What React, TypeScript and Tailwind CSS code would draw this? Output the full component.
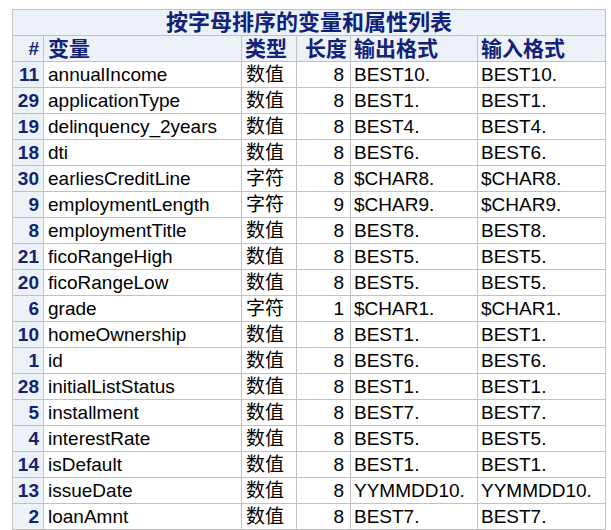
import React from "react";

const rows: [string, string, string, string, string, string][] = [
  ["11", "annualIncome", "数值", "8", "BEST10.", "BEST10."],
  ["29", "applicationType", "数值", "8", "BEST1.", "BEST1."],
  ["19", "delinquency_2years", "数值", "8", "BEST4.", "BEST4."],
  ["18", "dti", "数值", "8", "BEST6.", "BEST6."],
  ["30", "earliesCreditLine", "字符", "8", "$CHAR8.", "$CHAR8."],
  ["9", "employmentLength", "字符", "9", "$CHAR9.", "$CHAR9."],
  ["8", "employmentTitle", "数值", "8", "BEST8.", "BEST8."],
  ["21", "ficoRangeHigh", "数值", "8", "BEST5.", "BEST5."],
  ["20", "ficoRangeLow", "数值", "8", "BEST5.", "BEST5."],
  ["6", "grade", "字符", "1", "$CHAR1.", "$CHAR1."],
  ["10", "homeOwnership", "数值", "8", "BEST1.", "BEST1."],
  ["1", "id", "数值", "8", "BEST6.", "BEST6."],
  ["28", "initialListStatus", "数值", "8", "BEST1.", "BEST1."],
  ["5", "installment", "数值", "8", "BEST7.", "BEST7."],
  ["4", "interestRate", "数值", "8", "BEST5.", "BEST5."],
  ["14", "isDefault", "数值", "8", "BEST1.", "BEST1."],
  ["13", "issueDate", "数值", "8", "YYMMDD10.", "YYMMDD10."],
  ["2", "loanAmnt", "数值", "8", "BEST7.", "BEST7."],
];

const font = { fontFamily: '"Liberation Sans", Arial, "Noto Sans CJK SC", sans-serif' };

export default function App() {
  return (
    <div className="bg-white w-[611px] h-[530px] overflow-hidden pl-[12px] pt-[9px]" style={font}>
      <div className="grid grid-cols-[30px_197px_54px_53px_126px_127px] auto-rows-[25px] gap-px bg-[#c1c1c1] p-px w-[594px]">
        <div className="col-span-6 bg-[#edf2f9] text-[#112277] font-bold text-[22px] leading-none flex items-center justify-center">
          按字母排序的变量和属性列表
        </div>
        <div className="bg-[#edf2f9] text-[#112277] font-bold text-[19px] leading-none flex items-center justify-end pr-[4px]">#</div>
        <div className="bg-[#edf2f9] text-[#112277] font-bold text-[21px] leading-none flex items-center pl-[4px]">变量</div>
        <div className="bg-[#edf2f9] text-[#112277] font-bold text-[21px] leading-none flex items-center pl-[3px]">类型</div>
        <div className="bg-[#edf2f9] text-[#112277] font-bold text-[21px] leading-none flex items-center justify-end pr-[3px]">长度</div>
        <div className="bg-[#edf2f9] text-[#112277] font-bold text-[21px] leading-none flex items-center pl-[3px]">输出格式</div>
        <div className="bg-[#edf2f9] text-[#112277] font-bold text-[21px] leading-none flex items-center pl-[3px]">输入格式</div>
        {rows.map((r) => (
          <React.Fragment key={r[0]}>
            <div className="bg-[#edf2f9] text-[#112277] font-bold text-[19px] leading-none flex items-center justify-end pr-[4px]">{r[0]}</div>
            <div className="bg-white text-black text-[19px] leading-none flex items-center pl-[4px]">{r[1]}</div>
            <div className="bg-white text-black text-[19px] leading-none flex items-center pl-[4px]">{r[2]}</div>
            <div className="bg-white text-black text-[19px] leading-none flex items-center justify-end pr-[6px]">{r[3]}</div>
            <div className="bg-white text-black text-[19px] leading-none flex items-center pl-[3px]">{r[4]}</div>
            <div className="bg-white text-black text-[19px] leading-none flex items-center pl-[3px]">{r[5]}</div>
          </React.Fragment>
        ))}
      </div>
    </div>
  );
}
